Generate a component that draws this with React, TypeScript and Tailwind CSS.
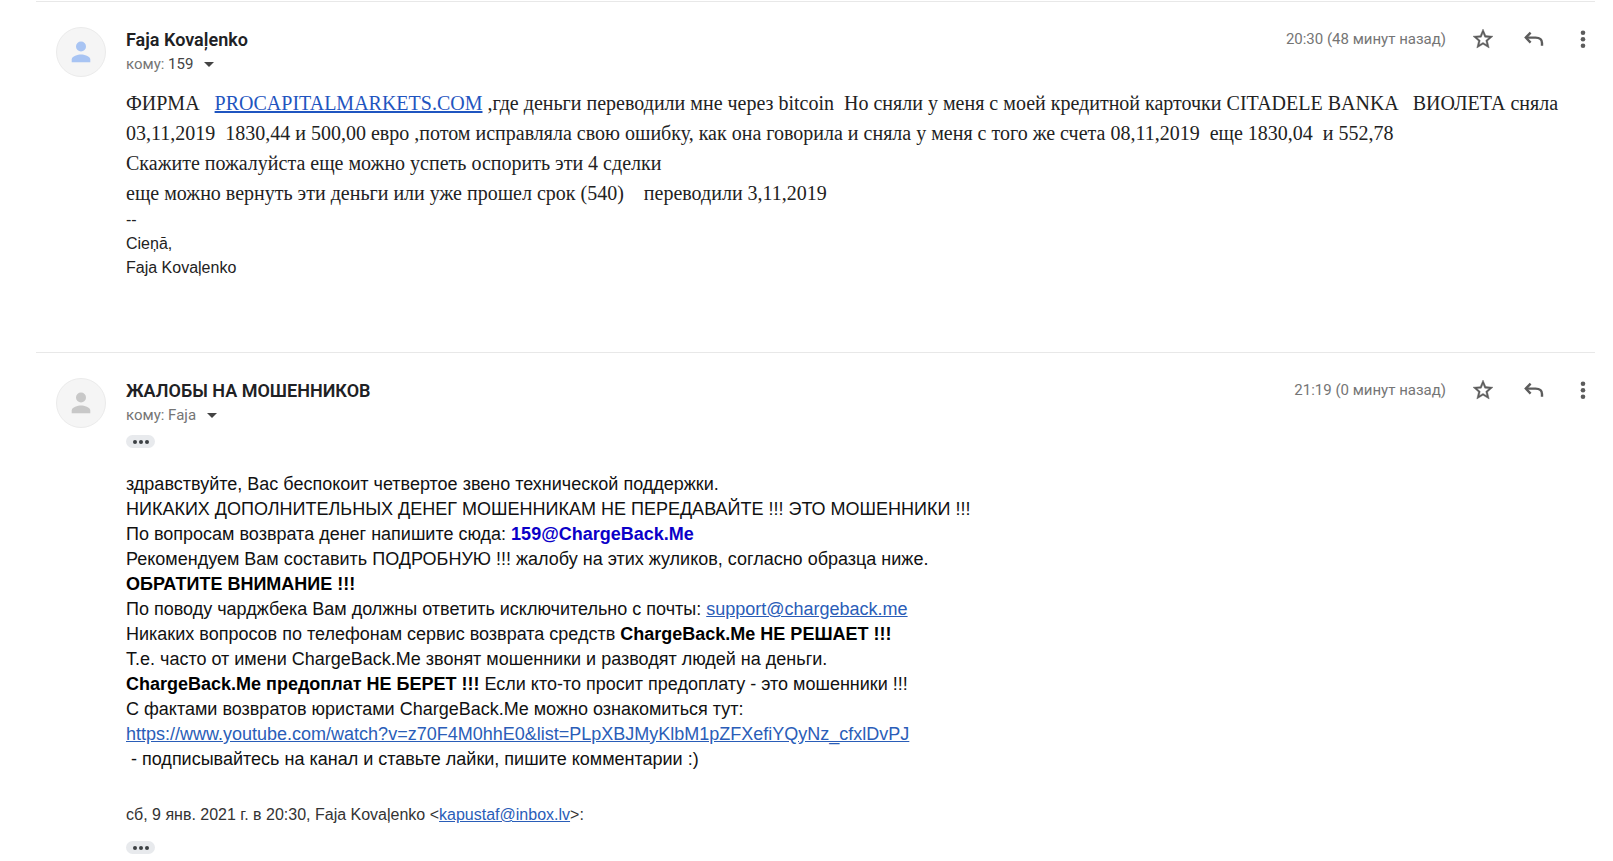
import type { ReactNode } from "react";
import { MdArrowDropDown } from "react-icons/md";

const linkClass = "text-[#2a5db8] underline";

function StarIcon() {
  return (
    <svg
      viewBox="0 0 24 24"
      className="size-6"
      fill="currentColor"
      stroke="currentColor"
      strokeWidth="0.4"
      aria-hidden="true"
    >
      <path d="M22 9.240l-7.190-.62L12 2 9.190 8.630 2 9.240l5.460 4.730L5.820 21 12 17.270 18.180 21l-1.630-7.030L22 9.240zM12 15.400l-3.760 2.270 1-4.280-3.320-2.880 4.380-.38L12 6.100l1.710 4.040 4.380.38-3.320 2.880 1 4.280L12 15.400z" />
    </svg>
  );
}

function MoreIcon() {
  return (
    <svg viewBox="0 0 24 24" className="size-6" fill="currentColor" aria-hidden="true">
      <circle cx="12" cy="5.700" r="2.300" />
      <circle cx="12" cy="12.200" r="2.300" />
      <circle cx="12" cy="18.700" r="2.300" />
    </svg>
  );
}

function ReplyIcon() {
  return (
    <svg viewBox="0 0 24 24" className="size-6" fill="none" stroke="currentColor" strokeWidth="2.4" aria-hidden="true">
      <path d="M8.600 5.600 3.800 10.600 8.600 15.600" />
      <path d="M4 10.600H13.500C17.400 10.600 20 12.500 20 16V18.700" />
    </svg>
  );
}

function PersonIcon({ className }: { className: string }) {
  return (
    <svg viewBox="0 0 20 22" className={className} fill="currentColor" aria-hidden="true">
      <circle cx="10" cy="5.500" r="5" />
      <path d="M.7 21.200V18.400C.7 15 6.900 13.400 10 13.400S19.300 15 19.300 18.400V21.200Z" />
    </svg>
  );
}

function TrimmedContent() {
  return (
    <button
      type="button"
      aria-label="Показать скрытый текст"
      className="flex h-[13px] w-[29px] items-center justify-center gap-[2px] rounded-full bg-[#e8eaed]"
    >
      <span className="size-1 rounded-full bg-[#3c4043]" />
      <span className="size-1 rounded-full bg-[#3c4043]" />
      <span className="size-1 rounded-full bg-[#3c4043]" />
    </button>
  );
}

type MessageProps = {
  sender: string;
  recipient: ReactNode;
  time: string;
  avatarClass: string;
  children: ReactNode;
};

function Message({ sender, recipient, time, avatarClass, children }: MessageProps) {
  return (
    <article className="flex gap-5 border-t border-[#e8e8e8] pt-[25px] pl-5">
      <div className="flex size-[50px] shrink-0 items-center justify-center rounded-full border border-[#ebebeb] bg-[#f5f5f5]">
        <PersonIcon className={avatarClass} />
      </div>
      <div className="min-w-0 flex-1">
        <header className="flex items-start justify-between">
          <div className="font-[Roboto,sans-serif]">
            <h2 className="text-[18px] leading-[25px] font-semibold text-[#202124]">{sender}</h2>
            <button type="button" className="flex items-center text-[15px] leading-6 text-[#757575]">
              <span>кому: {recipient}</span>
              <MdArrowDropDown className="ml-1 size-6 text-[#444]" />
            </button>
          </div>
          <div className="flex items-center font-[Roboto,sans-serif] text-[#5c5c5c]">
            <time className="mr-[25px] text-[15px] leading-6 text-[#757575]">{time}</time>
            <button type="button" aria-label="Пометить" className="mr-[27px]">
              <StarIcon />
            </button>
            <button type="button" aria-label="Ответить" className="mr-[25px]">
              <ReplyIcon />
            </button>
            <button type="button" aria-label="Ещё">
              <MoreIcon />
            </button>
          </div>
        </header>
        {children}
      </div>
    </article>
  );
}

export default function App() {
  return (
    <main className="bg-white pt-px pr-[18px] pl-9">
      <Message
        sender="Faja Kovaļenko"
        recipient={<span className="text-[#444]">159</span>}
        time="20:30 (48 минут назад)"
        avatarClass="h-[22px] w-5 text-[#a8c4f3]"
      >
        <div className="pt-3 pb-[72px] text-[#222]">
          <div className="font-['Liberation_Serif',serif] text-[20px] leading-[30px] whitespace-pre-wrap">
            <p>
              {"ФИРМА   "}
              <a href="#procapitalmarkets" className="text-[#1f55c0] underline">
                PROCAPITALMARKETS.COM
              </a>
              {" ,где деньги переводили мне через bitcoin  Но сняли у меня с моей кредитной карточки CITADELE BANKA   ВИОЛЕТА сняла "}
              {"03,11,2019  1830,44 и 500,00 евро ,потом исправляла свою ошибку, как она говорила и сняла у меня с того же счета 08,11,2019  еще 1830,04  и 552,78"}
            </p>
            <p>Скажите пожалуйста еще можно успеть оспорить эти 4 сделки</p>
            <p>{"еще можно вернуть эти деньги или уже прошел срок (540)    переводили 3,11,2019"}</p>
          </div>
          <div className="font-['Liberation_Sans',sans-serif] text-[16px] leading-6">
            <p>--</p>
            <p>Cieņā,</p>
            <p>Faja Kovaļenko</p>
          </div>
        </div>
      </Message>

      <Message
        sender="ЖАЛОБЫ НА МОШЕННИКОВ"
        recipient="Faja"
        time="21:19 (0 минут назад)"
        avatarClass="h-[22px] w-5 text-[#c8c8c8]"
      >
        <div className="pt-2 font-['Liberation_Sans',sans-serif]">
          <TrimmedContent />
          <div className="mt-6 text-[18px] leading-[25px] text-[#111]">
            <p>здравствуйте, Вас беспокоит четвертое звено технической поддержки.</p>
            <p>НИКАКИХ ДОПОЛНИТЕЛЬНЫХ ДЕНЕГ МОШЕННИКАМ НЕ ПЕРЕДАВАЙТЕ !!! ЭТО МОШЕННИКИ !!!</p>
            <p>
              По вопросам возврата денег напишите сюда:{" "}
              <b className="text-[#0b00c8]">159@ChargeBack.Me</b>
            </p>
            <p>Рекомендуем Вам составить ПОДРОБНУЮ !!! жалобу на этих жуликов, согласно образца ниже.</p>
            <p>
              <b className="text-black">ОБРАТИТЕ ВНИМАНИЕ !!!</b>
            </p>
            <p>
              По поводу чарджбека Вам должны ответить исключительно с почты:{" "}
              <a href="mailto:support@chargeback.me" className={linkClass}>
                support@chargeback.me
              </a>
            </p>
            <p>
              Никаких вопросов по телефонам сервис возврата средств{" "}
              <b className="text-black">ChargeBack.Me НЕ РЕШАЕТ !!!</b>
            </p>
            <p>Т.е. часто от имени ChargeBack.Me звонят мошенники и разводят людей на деньги.</p>
            <p>
              <b className="text-black">ChargeBack.Me предоплат НЕ БЕРЕТ !!!</b> Если кто-то просит предоплату - это
              мошенники !!!
            </p>
            <p>С фактами возвратов юристами ChargeBack.Me можно ознакомиться тут:</p>
            <p>
              <a href="#youtube" className={linkClass}>
                https://www.youtube.com/watch?v=z70F4M0hhE0&amp;list=PLpXBJMyKlbM1pZFXefiYQyNz_cfxlDvPJ
              </a>
            </p>
            <p className="whitespace-pre-wrap">{" - подписывайтесь на канал и ставьте лайки, пишите комментарии :)"}</p>
          </div>
          <p className="mt-[31px] mb-[14px] text-[16px] leading-6 text-[#333]">
            сб, 9 янв. 2021 г. в 20:30, Faja Kovaļenko &lt;
            <a href="mailto:kapustaf@inbox.lv" className={linkClass}>
              kapustaf@inbox.lv
            </a>
            &gt;:
          </p>
          <TrimmedContent />
        </div>
      </Message>
    </main>
  );
}
